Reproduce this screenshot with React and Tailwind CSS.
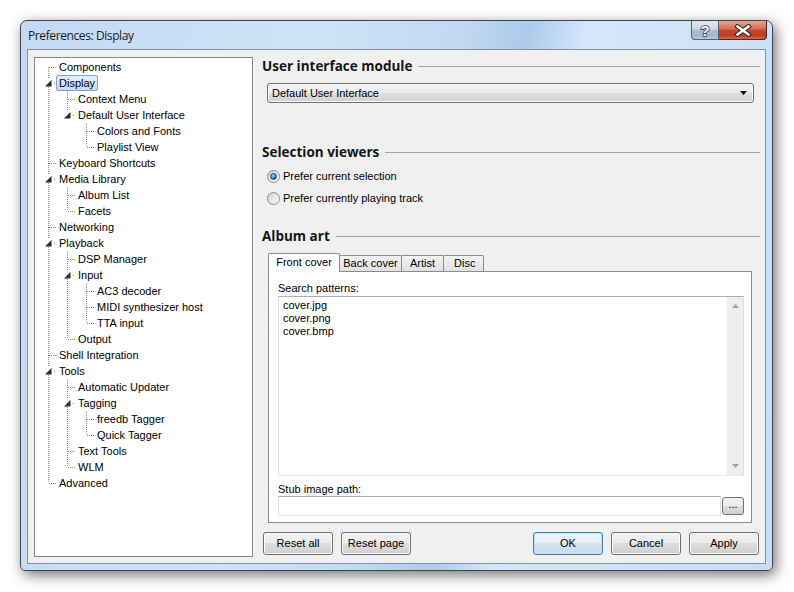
import React from "react";

const tree = [
  ["Components"],
  ["Display", [["Context Menu"], ["Default User Interface", [["Colors and Fonts"], ["Playlist View"]]]]],
  ["Keyboard Shortcuts"],
  ["Media Library", [["Album List"], ["Facets"]]],
  ["Networking"],
  ["Playback", [["DSP Manager"], ["Input", [["AC3 decoder"], ["MIDI synthesizer host"], ["TTA input"]]], ["Output"]]],
  ["Shell Integration"],
  ["Tools", [["Automatic Updater"], ["Tagging", [["freedb Tagger"], ["Quick Tagger"]]], ["Text Tools"], ["WLM"]]],
  ["Advanced"],
];

function flatten(nodes, lines = [], out = []) {
  nodes.forEach(([label, kids], i) => {
    const last = i === nodes.length - 1;
    out.push({ label, lines, last, kids: !!kids, first: out.length === 0 });
    if (kids) flatten(kids, [...lines, !last], out);
  });
  return out;
}

const rows = flatten(tree);
const dot = { stroke: "#8a8a8a", strokeDasharray: "1 1", shapeRendering: "crispEdges" };

function Connector({ row }) {
  const top = !row.first;
  const bottom = !row.last;
  if (row.kids) {
    return (
      <svg width="17" height="16" className="shrink-0">
        {top && <line x1="9.5" y1="0" x2="9.5" y2="4" {...dot} />}
        {bottom && <line x1="9.5" y1="12" x2="9.5" y2="16" {...dot} />}
        <polygon points="12.5,5 12.5,11.5 6,11.5" fill="#2a2a2a" />
        <line x1="15" y1="8.5" x2="17" y2="8.5" {...dot} />
      </svg>
    );
  }
  return (
    <svg width="17" height="16" className="shrink-0">
      {top && <line x1="9.5" y1="0" x2="9.5" y2="8" {...dot} />}
      {bottom && <line x1="9.5" y1="8" x2="9.5" y2="16" {...dot} />}
      <line x1="10" y1="8.5" x2="17" y2="8.5" {...dot} />
    </svg>
  );
}

function TreeRow({ row }) {
  const selected = row.label === "Display";
  return (
    <div className="flex h-4 items-center">
      {row.lines.map((l, i) => (
        <svg key={i} width="19" height="16" className="shrink-0">
          {l && <line x1="9.5" y1="0" x2="9.5" y2="16" {...dot} />}
        </svg>
      ))}
      <Connector row={row} />
      <span
        className={
          selected
            ? "px-[2px] leading-[14px] border rounded-[2px] whitespace-nowrap border-[#7da2ce] bg-[linear-gradient(#e4effd,#c6dcf9)]"
            : "px-[2px] leading-[14px] border rounded-[2px] whitespace-nowrap border-transparent"
        }
      >
        {row.label}
      </span>
    </div>
  );
}

function Heading({ children }) {
  return (
    <div className="flex items-center h-[18px] gap-[6px]">
      <span className="font-['Open_Sans',sans-serif] font-bold text-[13.5px] text-[#151515] whitespace-nowrap">
        {children}
      </span>
      <div className="flex-1 h-px bg-[#a3a3a3] mt-[1px]" />
    </div>
  );
}

function Radio({ checked }) {
  return (
    <span className="w-[13px] h-[13px] rounded-full border border-[#8b8b8b] bg-[linear-gradient(135deg,#d2d2d2,#fbfbfb)] flex items-center justify-center shrink-0">
      {checked && (
        <span className="w-[7px] h-[7px] rounded-full border border-[#164d7a] bg-[radial-gradient(circle_at_40%_35%,#a6dcfb,#2478bb_60%,#0d4c80)]" />
      )}
    </span>
  );
}

function Btn({ children, primary, className = "" }) {
  return (
    <div
      className={
        (primary
          ? "border-[#3c7fb1] bg-[linear-gradient(#eef6fc_0%,#e2eef7_50%,#d2e4f1_50%,#c8deee_100%)] shadow-[inset_0_0_0_1px_#b8e3fb] "
          : "border-[#707070] bg-[linear-gradient(#f2f2f2_0%,#ebebeb_50%,#dddddd_50%,#cfcfcf_100%)] shadow-[inset_0_0_0_1px_#fbfbfb] ") +
        "w-[70px] h-[23px] rounded-[3px] border flex items-center justify-center text-[11px] text-black " +
        className
      }
    >
      {children}
    </div>
  );
}

export default function App() {
  return (
    <div className="w-[794px] h-[592px] bg-white pt-[20px] pl-[20px] font-['Liberation_Sans',sans-serif] text-[11px] text-black overflow-hidden">
      <div className="w-[753px] h-[551px] flex flex-col rounded-t-[7px] rounded-b-[5px] border border-[#3c4651] shadow-[3px_4px_14px_rgba(0,0,0,0.55)] bg-[linear-gradient(100deg,#c3daf2_0%,#cfe3f7_35%,#c2d9f1_52%,#adcaea_60%,#d5e7f9_67%,#c8ddf4_100%)]">
        {/* Title bar */}
        <div className="h-[28px] flex shrink-0">
          <div className="pl-[7px] pt-[6px] font-['Open_Sans',sans-serif] text-[12px] tracking-[-0.4px] text-[#1a1a1a]">
            Preferences: Display
          </div>
          <div className="ml-auto mr-[5px] flex h-[19px]">
            <div className="w-[28px] h-full border border-t-0 border-[#56606c] rounded-bl-[4px] bg-[linear-gradient(#dfe7f0_0%,#cfdae6_45%,#aebfd1_50%,#a2b6cb_80%,#b9cbdd_100%)] flex items-center justify-center">
              <svg width="12" height="15">
                <text x="6" y="13" textAnchor="middle" fontFamily="Liberation Sans, sans-serif" fontWeight="bold" fontSize="15" fill="#f4f6f8" stroke="#3b4756" strokeWidth="1.6" paintOrder="stroke">?</text>
              </svg>
            </div>
            <div className="w-[48px] h-full border border-t-0 border-l-0 border-[#5a2219] rounded-br-[4px] bg-[linear-gradient(#e6a797_0%,#d9887590_45%,#c9452d_50%,#c03a20_80%,#d86a4e_100%)] bg-[#c9452d] flex items-center justify-center">
              <svg width="18" height="13">
                <path d="M3.5 2.5 L14.5 10.5 M14.5 2.5 L3.5 10.5" stroke="#3a2622" strokeWidth="4.6" strokeLinecap="square" />
                <path d="M3.5 2.5 L14.5 10.5 M14.5 2.5 L3.5 10.5" stroke="#fff" strokeWidth="2.4" strokeLinecap="square" />
              </svg>
            </div>
          </div>
        </div>

        {/* Client area */}
        <div className="mx-[6px] mb-[6px] flex-1 bg-[#f0f0f0] border border-[#7d91a7] flex pl-[6px] pt-[7px] pb-[6px] pr-[5px]">
          {/* Tree */}
          <div className="w-[219px] h-[500px] bg-white border border-[#828790] pl-[4px] pt-[1px] shrink-0">
            {rows.map((r) => (
              <TreeRow key={r.label} row={r} />
            ))}
          </div>

          {/* Right side */}
          <div className="ml-[9px] flex-1 flex flex-col">
            <div className="mt-[0px]">
              <Heading>User interface module</Heading>
            </div>
            <div className="mt-[8px] ml-[5px] mr-[6px] h-[20px] rounded-[3px] border border-[#707070] bg-[linear-gradient(#f3f3f3_0%,#ececec_50%,#dedede_50%,#d2d2d2_100%)] shadow-[inset_0_0_0_1px_#fafafa] flex items-center pl-[4px] pr-[6px]">
              <span>Default User Interface</span>
              <svg width="7" height="4" className="ml-auto">
                <polygon points="0,0 7,0 3.5,4" fill="#000" />
              </svg>
            </div>

            <div className="mt-[40px]">
              <Heading>Selection viewers</Heading>
            </div>
            <div className="mt-[7px] ml-[5px] h-4 flex items-center gap-[3px]">
              <Radio checked />
              <span>Prefer current selection</span>
            </div>
            <div className="mt-[6px] ml-[5px] h-4 flex items-center gap-[3px]">
              <Radio />
              <span>Prefer currently playing track</span>
            </div>

            <div className="mt-[21px]">
              <Heading>Album art</Heading>
            </div>

            {/* Tabs */}
            <div className="mt-[8px] ml-[6px] mr-[8px] flex flex-col">
              <div className="h-[18px] flex items-end">
                <div className="relative z-10 -mb-px w-[72px] h-[19px] bg-white border border-b-0 border-[#898c95] rounded-t-[2px] flex items-center justify-center pb-[1px]">
                  Front cover
                </div>
                <div className="-ml-px w-[63px] h-[16px] border border-b-0 border-[#898c95] rounded-t-[2px] bg-[linear-gradient(#f4f4f4,#e1e1e1)] flex items-center justify-center">
                  Back cover
                </div>
                <div className="-ml-px w-[43px] h-[16px] border border-b-0 border-[#898c95] rounded-t-[2px] bg-[linear-gradient(#f4f4f4,#e1e1e1)] flex items-center justify-center">
                  Artist
                </div>
                <div className="-ml-px w-[41px] h-[16px] border border-b-0 border-[#898c95] rounded-t-[2px] bg-[linear-gradient(#f4f4f4,#e1e1e1)] flex items-center pl-[10px]">
                  Disc
                </div>
              </div>
              <div className="h-[252px] bg-white border border-[#898c95] flex flex-col pl-[9px] pr-[7px]">
                <div className="mt-[9px] h-[14px] leading-[14px]">Search patterns:</div>
                <div className="mt-[1px] h-[180px] border border-[#abadb3] border-b-[#e3e9ef] border-x-[#dbdfe6] flex">
                  <div className="flex-1 pl-[4px] pt-[2px] leading-[13px]">
                    <div>cover.jpg</div>
                    <div>cover.png</div>
                    <div>cover.bmp</div>
                  </div>
                  <div className="w-[17px] bg-[#eeeeee] border-l border-[#f8f8f8] flex flex-col items-center justify-between py-[7px]">
                    <svg width="7" height="4">
                      <polygon points="3.5,0 7,4 0,4" fill="#a3a3a3" />
                    </svg>
                    <svg width="7" height="4">
                      <polygon points="0,0 7,0 3.5,4" fill="#a3a3a3" />
                    </svg>
                  </div>
                </div>
                <div className="mt-[6px] h-[14px] leading-[14px]">Stub image path:</div>
                <div className="flex items-center gap-[1px]">
                  <div className="flex-1 h-[20px] border border-[#abadb3] border-b-[#e3e9ef] border-x-[#dbdfe6] bg-white" />
                  <div className="w-[22px] h-[18px] rounded-[3px] border border-[#707070] bg-[linear-gradient(#f2f2f2_0%,#ebebeb_50%,#dddddd_50%,#cfcfcf_100%)] flex items-center justify-center text-[11px] leading-none pb-[3px]">
                    ...
                  </div>
                </div>
              </div>
            </div>

            {/* Buttons */}
            <div className="mt-[9px] flex">
              <Btn className="ml-[1px]">Reset all</Btn>
              <Btn className="ml-[8px]">Reset page</Btn>
              <Btn primary className="ml-auto">OK</Btn>
              <Btn className="ml-[8px]">Cancel</Btn>
              <Btn className="ml-[8px] mr-[1px]">Apply</Btn>
            </div>
          </div>
        </div>
      </div>
    </div>
  );
}
